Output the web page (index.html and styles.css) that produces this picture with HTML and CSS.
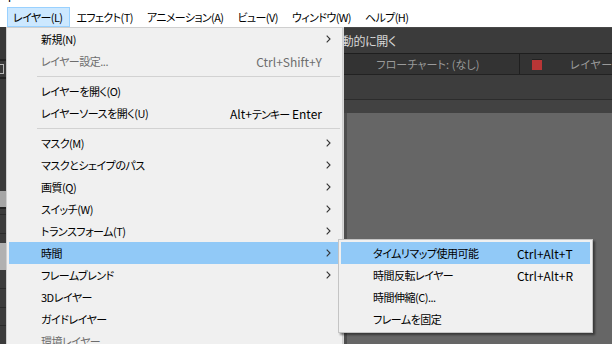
FILE: index.html
```html
<!DOCTYPE html>
<html lang="ja">
<head>
<meta charset="utf-8">
<title>Layer menu</title>
<link rel="stylesheet" href="styles.css">
</head>
<body>
<div class="app">
  <div class="titlebar"><span class="title-text">ーP</span></div>
  <div class="menubar">
    <span class="mb-item active">レイヤー(L)</span>
    <span class="mb-item">エフェクト(T)</span>
    <span class="mb-item">アニメーション(A)</span>
    <span class="mb-item">ビュー(V)</span>
    <span class="mb-item">ウィンドウ(W)</span>
    <span class="mb-item">ヘルプ(H)</span>
  </div>
  <div class="workspace">
    <div class="leftpanel">
      <div class="lp-a"></div>
      <div class="lp-line"></div>
      <div class="lp-icon-row"><span class="lp-icon"></span></div>
      <div class="lp-line"></div>
      <div class="lp-b"></div>
      <div class="lp-light lp-h16"></div>
      <div class="lp-line"></div>
      <div class="lp-c lp-h5"></div>
      <div class="lp-sep"></div>
      <div class="lp-c lp-h18"></div>
      <div class="lp-sep"></div>
      <div class="lp-c lp-h9"></div>
      <div class="lp-light lp-h28"></div>
      <div class="lp-c lp-h18"></div>
      <div class="lp-sep"></div>
      <div class="lp-c lp-h18"></div>
      <div class="lp-sep"></div>
      <div class="lp-c lp-h18"></div>
      <div class="lp-sep"></div>
      <div class="lp-c lp-h18"></div>
    </div>
    <div class="rightpanel">
      <div class="rp-top"><span class="rp-top-text">自動的に開く</span></div>
      <div class="rp-tabs">
        <div class="rp-tab rp-tab-flow">フローチャート: (なし)</div>
        <div class="rp-tab rp-tab-layer"><span class="red-swatch"></span><span class="rp-layer-label">レイヤー: (なし)</span></div>
      </div>
      <div class="rp-toolbar"></div>
      <div class="rp-band"></div>
      <div class="rp-view"><div class="rp-view-edge"></div><div class="rp-view-fill"></div></div>
    </div>
  </div>
</div>

<div class="menu main-menu">
  <div class="row"><span class="label">新規(N)</span><span class="arrow"><svg width="5" height="8" viewBox="0 0 5 8"><path d="M0.7 0.7 L4 4 L0.7 7.3" fill="none" stroke="#333" stroke-width="1.1"/></svg></span></div>
  <div class="row disabled"><span class="label">レイヤー設定...</span><span class="shortcut">Ctrl+Shift+Y</span></div>
  <div class="sep"></div>
  <div class="row"><span class="label">レイヤーを開く(O)</span></div>
  <div class="row"><span class="label">レイヤーソースを開く(U)</span><span class="shortcut">Alt+<span class="kana">テンキー</span> Enter</span></div>
  <div class="sep"></div>
  <div class="row"><span class="label">マスク(M)</span><span class="arrow"><svg width="5" height="8" viewBox="0 0 5 8"><path d="M0.7 0.7 L4 4 L0.7 7.3" fill="none" stroke="#333" stroke-width="1.1"/></svg></span></div>
  <div class="row"><span class="label">マスクとシェイプのパス</span><span class="arrow"><svg width="5" height="8" viewBox="0 0 5 8"><path d="M0.7 0.7 L4 4 L0.7 7.3" fill="none" stroke="#333" stroke-width="1.1"/></svg></span></div>
  <div class="row"><span class="label">画質(Q)</span><span class="arrow"><svg width="5" height="8" viewBox="0 0 5 8"><path d="M0.7 0.7 L4 4 L0.7 7.3" fill="none" stroke="#333" stroke-width="1.1"/></svg></span></div>
  <div class="row"><span class="label">スイッチ(W)</span><span class="arrow"><svg width="5" height="8" viewBox="0 0 5 8"><path d="M0.7 0.7 L4 4 L0.7 7.3" fill="none" stroke="#333" stroke-width="1.1"/></svg></span></div>
  <div class="row"><span class="label">トランスフォーム(T)</span><span class="arrow"><svg width="5" height="8" viewBox="0 0 5 8"><path d="M0.7 0.7 L4 4 L0.7 7.3" fill="none" stroke="#333" stroke-width="1.1"/></svg></span></div>
  <div class="row hot"><span class="label">時間</span><span class="arrow"><svg width="5" height="8" viewBox="0 0 5 8"><path d="M0.7 0.7 L4 4 L0.7 7.3" fill="none" stroke="#333" stroke-width="1.1"/></svg></span></div>
  <div class="row"><span class="label">フレームブレンド</span><span class="arrow"><svg width="5" height="8" viewBox="0 0 5 8"><path d="M0.7 0.7 L4 4 L0.7 7.3" fill="none" stroke="#333" stroke-width="1.1"/></svg></span></div>
  <div class="row"><span class="label">3Dレイヤー</span></div>
  <div class="row"><span class="label">ガイドレイヤー</span></div>
  <div class="row disabled"><span class="label">環境レイヤー</span></div>
</div>

<div class="menu sub-menu">
  <div class="row hot"><span class="label">タイムリマップ使用可能</span><span class="sc">Ctrl+Alt+T</span></div>
  <div class="row"><span class="label">時間反転レイヤー</span><span class="sc">Ctrl+Alt+R</span></div>
  <div class="row"><span class="label">時間伸縮(C)...</span></div>
  <div class="row"><span class="label">フレームを固定</span></div>
</div>
</body>
</html>
```

FILE: styles.css
```css
* { box-sizing: border-box; }
html, body { margin: 0; padding: 0; }
body {
  width: 612px;
  height: 344px;
  overflow: hidden;
  background: #ffffff;
  font-family: "Noto Sans CJK JP", "Noto Sans", sans-serif;
  font-size: 11px;
  font-feature-settings: "palt";
  color: #000;
  position: relative;
}
.app {
  display: flex;
  flex-direction: column;
  height: 344px;
}
.titlebar {
  height: 4px;
  overflow: hidden;
}
.title-text {
  display: block;
  font-size: 12px;
  line-height: 12px;
  margin-top: -9px;
  margin-left: -4px;
  color: #000;
}
.menubar {
  height: 23px;
  padding-top: 3px;
  padding-left: 7px;
  display: flex;
  background: #fff;
}
.mb-item {
  height: 20px;
  line-height: 18px;
  padding: 0 7px 0 5px;
  border: 1px solid transparent;
  white-space: nowrap;
  letter-spacing: -0.6px;
}
.mb-item.active {
  background: #cce8ff;
  border-color: #99d1ff;
}

/* workspace */
.workspace {
  flex: 1;
  display: flex;
  background: #3a3a3a;
  min-height: 0;
}
.leftpanel {
  width: 343px;
  flex-shrink: 0;
  display: flex;
  flex-direction: column;
  background: #3b3b3b;
}
.lp-a { height: 33px; background: #383838; }
.lp-line { height: 2px; background: #232323; }
.lp-icon-row { height: 16px; background: #3a3a3a; display: flex; align-items: center; }
.lp-icon { width: 4px; height: 10px; border: 1px solid #b8b8b8; border-left: none; }
.lp-b { height: 114px; background: #3b3b3b; }
.lp-light { background: #a6a6a6; }
.lp-c { background: #3c3c3c; }
.lp-sep { height: 1px; background: #2b2b2b; }
.lp-h16 { height: 16px; }
.lp-h5 { height: 5px; }
.lp-h18 { height: 18px; }
.lp-h9 { height: 9px; }
.lp-h28 { height: 28px; background: #b1b1b1; }

.rightpanel {
  flex: 1;
  min-width: 0;
  display: flex;
  flex-direction: column;
  overflow: hidden;
}
.rp-top {
  height: 26px;
  background: #3b3b3b;
  border-top: 1px solid #484848;
  display: flex;
  align-items: center;
  color: #d8d8d8;
  white-space: nowrap;
  font-size: 12px;
  letter-spacing: -0.3px;
}
.rp-top-text { margin-left: -13px; }
.rp-tabs {
  height: 22px;
  display: flex;
  border-top: 1px solid #1e1e1e;
  border-bottom: 1px solid #222;
  background: #333333;
}
.rp-tab {
  display: flex;
  align-items: center;
  color: #9a9a9a;
  white-space: nowrap;
}
.rp-tab-flow {
  width: 177px;
  flex-shrink: 0;
  justify-content: center;
  border-right: 1px solid #1f1f1f;
  padding-right: 6px;
  letter-spacing: 0.1px;
}
.rp-tab-layer { flex: 1; min-width: 0; padding-left: 12px; overflow: hidden; }
.red-swatch {
  width: 10px;
  height: 11px;
  flex-shrink: 0;
  background: #b83636;
  border-top: 1px solid #222;
}
.rp-layer-label { margin-left: 28px; letter-spacing: 0.6px; }
.rp-toolbar { height: 25px; background: #3d3d3d; border-bottom: 1px solid #2c2c2c; }
.rp-band { height: 13px; background: #424242; }
.rp-view { flex: 1; display: flex; }
.rp-view-edge { width: 4px; background: #4e4e4e; }
.rp-view-fill { flex: 1; background: #666666; }

/* menus (overlays) */
.menu {
  position: absolute;
  background: #f0f0f0;
  border: 1px solid #cfcfcf;
  padding: 2px;
  display: flex;
  flex-direction: column;
}
.main-menu {
  left: 6px;
  top: 27px;
  width: 337px;
  height: 330px;
  padding-top: 0;
  box-shadow: 1px 0 0 #d8d8d8;
}
.row {
  height: 22px;
  display: flex;
  align-items: center;
  white-space: nowrap;
  flex-shrink: 0;
}
.label { letter-spacing: -0.5px; }
.main-menu .row { padding-left: 32px; padding-right: 8px; }
.main-menu .label { flex: 1; }
.shortcut { margin-right: 10px; font-size: 12px; }
.kana { font-size: 11px; letter-spacing: -0.9px; }
.sc { font-size: 12px; }
.arrow { display: flex; align-items: center; width: 6px; margin-right: 0; }
.row.hot { background: #91c9f7; }
.row.disabled { color: #6d6d6d; }
.sep {
  height: 8px;
  flex-shrink: 0;
  display: flex;
  align-items: center;
  padding-left: 28px;
}
.sep::after {
  content: "";
  flex: 1;
  height: 1px;
  background: #d2d2d2;
}
.sub-menu {
  left: 338px;
  top: 239px;
  width: 255px;
  height: 94px;
  border-color: #c4c4c4;
  box-shadow: 2px 2px 2px rgba(0, 0, 0, 0.45);
}
.sub-menu .row { padding-left: 32px; }
.sub-menu .label { width: 144px; }
```
